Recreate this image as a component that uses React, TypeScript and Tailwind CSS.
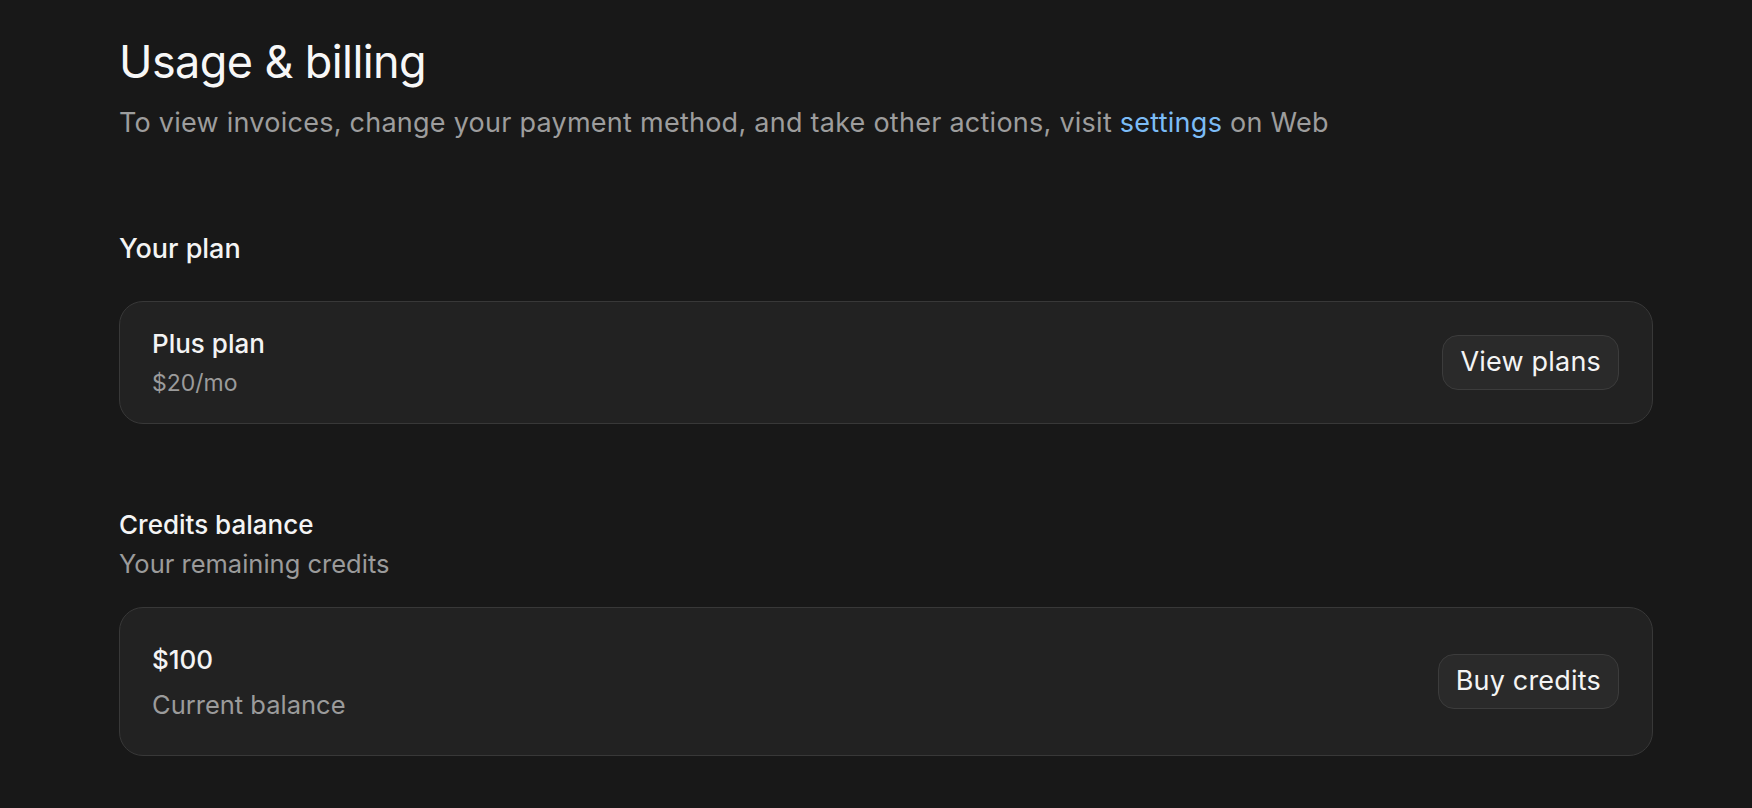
import React from "react";

type RowProps = {
  title: string;
  subtitle: string;
  action: string;
  big?: boolean;
};

const CardRow = ({ title, subtitle, action, big }: RowProps) => {
  return (
    <div
      className={`flex items-center justify-between rounded-[24px] border border-[#383838] bg-[#222222] pl-[32px] pr-[33px] ${
        big ? "h-[149px]" : "h-[123px]"
      }`}
    >
      <div className={`flex flex-col ${big ? "gap-[14px]" : "gap-[8px]"}`}>
        <span className="text-[26px] leading-[32px] font-medium text-[#f4f4f4]">
          {title}
        </span>
        <span
          className={`leading-[30px] text-[#9b9b9b] ${
            big ? "text-[25.5px]" : "text-[23px]"
          }`}
        >
          {subtitle}
        </span>
      </div>
      <button className="h-[55px] rounded-[16px] border border-[#3c3c3c] bg-[#2a2a2a] px-[17px] text-[27px] tracking-[0.2px] text-[#f4f4f4]">
        {action}
      </button>
    </div>
  );
};

export default function App() {
  return (
    <div
      className="min-h-[808px] w-full bg-[#181818] pl-[119px] pr-[99px] pt-[34px]"
      style={{ fontFamily: "Inter, 'Noto Sans', sans-serif" }}
    >
      <h1 className="text-[45px] leading-[56px] font-normal tracking-[-0.6px] text-[#f7f7f7]">
        Usage &amp; billing
      </h1>
      <p className="mt-[17px] text-[27px] leading-[32px] tracking-[0.25px] text-[#9d9d9d]">
        To view invoices, change your payment method, and take other actions,
        visit <span className="text-[#7cbcf6]">settings</span> on Web
      </p>

      {/* plan */}
      <div className="mt-[93px]">
        <h2 className="text-[27px] leading-[34px] font-medium text-[#f4f4f4]">
          Your plan
        </h2>
        <div className="mt-[35px]">
          <CardRow title="Plus plan" subtitle="$20/mo" action="View plans" />
        </div>
      </div>

      {/* credits */}
      <div className="mt-[84px]">
        <h2 className="text-[26px] leading-[34px] font-medium text-[#f4f4f4]">
          Credits balance
        </h2>
        <p className="mt-[6px] text-[25.5px] leading-[32px] text-[#9b9b9b]">
          Your remaining credits
        </p>
        <div className="mt-[27px]">
          <CardRow
            title="$100"
            subtitle="Current balance"
            action="Buy credits"
            big
          />
        </div>
      </div>
    </div>
  );
}
